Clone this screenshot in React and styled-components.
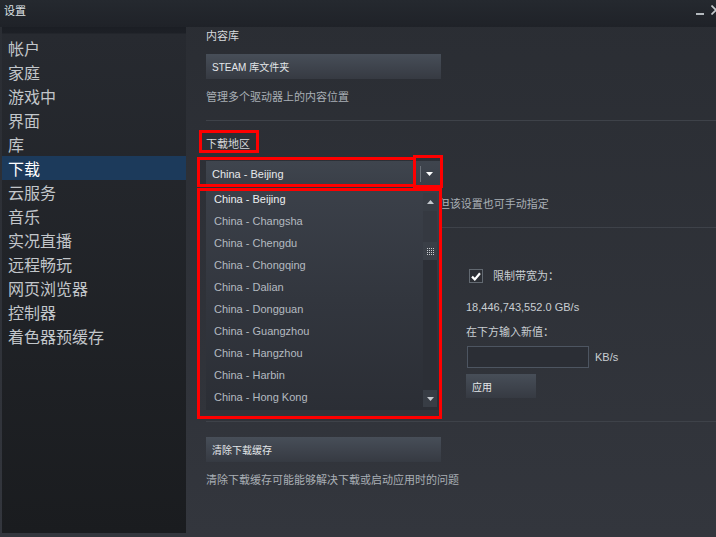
import React from 'react';
import styled, { createGlobalStyle } from 'styled-components';

const FONT = `"Liberation Sans", "Noto Sans CJK SC", Arial, sans-serif`;

const Global = createGlobalStyle`
  html, body { margin: 0; padding: 0; background: #2a2d33; }
  #root { width: 716px; height: 537px; }
  * { box-sizing: border-box; }
`;

const Window = styled.div`
  position: relative;
  width: 716px;
  height: 537px;
  overflow: hidden;
  display: flex;
  flex-direction: column;
  background: linear-gradient(to bottom, #2a2d33 0%, #33363d 100%);
  font-family: ${FONT};
`;

const TitleBar = styled.div`
  flex: none;
  height: 27px;
  display: flex;
  align-items: flex-start;
  justify-content: space-between;
  padding: 4px 0 0 4px;
  background: linear-gradient(to bottom, #25292f, #1f2228);
`;

const Title = styled.span`
  font-size: 11px;
  line-height: 14px;
  color: #dfe3e6;
`;

const Controls = styled.div`
  display: flex;
  align-items: flex-start;
  margin-right: -5px;
`;

const MinimizeBar = styled.div`
  width: 8px;
  height: 2px;
  margin-top: 9px;
  background: #b4b9be;
`;

const CloseIcon = styled.svg`
  width: 10px;
  height: 10px;
  margin: 1px 0 0 7px;
`;

const Body = styled.div`
  flex: 1;
  display: flex;
  min-height: 0;
`;

const Sidebar = styled.nav`
  flex: none;
  width: 184px;
  margin: 0 0 4px 2px;
  padding-top: 9px;
  background: linear-gradient(
    to bottom,
    #1b1e24 0px,
    #1d2026 6px,
    #272a30 7px,
    #1a1c1f 100%
  );
`;

const NavItem = styled.div`
  height: 24px;
  line-height: 28px;
  overflow: visible;
  padding-left: 6px;
  font-size: 16px;
  color: ${(p) => (p.$active ? '#ffffff' : '#c2c6ca')};
  background: ${(p) => (p.$active ? '#1c3a5b' : 'transparent')};
  white-space: nowrap;
`;

const Main = styled.main`
  flex: 1;
  min-width: 0;
  display: flex;
  flex-direction: column;
  padding: 2px 0 0 20px;
`;

const Label = styled.div`
  font-size: 11px;
  line-height: 14px;
  color: #d6d9dc;
  margin-top: ${(p) => p.$mt || 0}px;
  white-space: nowrap;
`;

const Desc = styled.div`
  font-size: 11px;
  line-height: 14px;
  color: #a9afb5;
  margin-top: ${(p) => p.$mt || 0}px;
  white-space: nowrap;
`;

const Button = styled.div`
  width: ${(p) => p.$w || 235}px;
  height: ${(p) => p.$h || 25}px;
  margin-top: ${(p) => p.$mt || 0}px;
  display: flex;
  align-items: center;
  padding-left: 6px;
  font-size: 10px;
  color: #e3e6e9;
  background: linear-gradient(to bottom, #474e58 0%, #3d424b 60%, #363a42 100%);
  white-space: nowrap;
`;

const Divider = styled.div`
  height: 1px;
  flex: none;
  background: #3e4249;
  margin-top: ${(p) => p.$mt || 0}px;
`;

const DropdownWrap = styled.div`
  position: relative;
  width: 234px;
  margin-top: 10px;
  z-index: 2;
`;

const DropdownBox = styled.div`
  height: 25px;
  display: flex;
  align-items: center;
  background: linear-gradient(to bottom, #3f454e, #3a3f48);
`;

const DropdownValue = styled.div`
  flex: 1;
  padding-left: 6px;
  font-size: 11px;
  color: #e6e9ec;
`;

const ArrowButton = styled.div`
  width: 20px;
  height: 100%;
  display: flex;
  align-items: center;
`;

const Separator = styled.div`
  width: 1px;
  height: 16px;
  background: #6c727a;
  margin-right: 5px;
`;

const Triangle = styled.svg`
  width: 7px;
  height: 4px;
  display: block;
`;

const List = styled.div`
  position: absolute;
  left: 0;
  top: 28px;
  width: 234px;
  height: 221px;
  display: flex;
  background: linear-gradient(to bottom, #3b4049 0%, #32363e 50%, #2b2e35 100%);
`;

const ListItems = styled.div`
  flex: 1;
`;

const ListItem = styled.div`
  height: 22px;
  line-height: 21px;
  padding-left: 8px;
  font-size: 11px;
  color: ${(p) => (p.$current ? '#eceef0' : '#b4bac0')};
  white-space: nowrap;
`;

const Scrollbar = styled.div`
  width: 14px;
  margin: 4px 3px 3px 0;
  display: flex;
  flex-direction: column;
`;

const ScrollBtn = styled.div`
  height: ${(p) => p.$h}px;
  display: flex;
  align-items: center;
  justify-content: center;
  background: #383d45;
`;

const TrackTop = styled.div`
  height: 31px;
  background: #353941;
`;

const Thumb = styled.div`
  height: 18px;
  display: flex;
  align-items: center;
  justify-content: center;
  background: #3a3f47;
`;

const TrackBottom = styled.div`
  flex: 1;
  background: #2c2f36;
`;

const Section = styled.div`
  display: grid;
  grid-template-columns: 235px 1fr;
  column-gap: 25px;
`;

const Column = styled.div`
  display: flex;
  flex-direction: column;
  align-items: flex-start;
`;

const CheckRow = styled.div`
  display: flex;
  align-items: center;
  height: 14px;
  margin-top: 41px;
  margin-left: 3px;
  gap: 10px;
`;

const CheckBox = styled.div`
  width: 14px;
  height: 14px;
  border: 1px solid #626971;
  background: #2c2f35;
  display: flex;
  align-items: center;
  justify-content: center;
`;

const Text = styled.span`
  font-size: 11px;
  line-height: 14px;
  color: ${(p) => p.$color || '#c9ced2'};
  white-space: nowrap;
`;

const Para = styled.div`
  font-size: 11px;
  line-height: 14px;
  color: #c9ced2;
  margin-top: ${(p) => p.$mt || 0}px;
  white-space: nowrap;
`;

const InputRow = styled.div`
  display: flex;
  align-items: center;
  margin-top: 7px;
  gap: 6px;
`;

const Input = styled.div`
  width: 122px;
  height: 22px;
  margin-left: 1px;
  border: 1px solid #4d5561;
  background: #2b2e35;
`;

const RedBox = styled.div`
  position: absolute;
  left: ${(p) => p.$x}px;
  top: ${(p) => p.$y}px;
  width: ${(p) => p.$w}px;
  height: ${(p) => p.$h}px;
  border: 3px solid #ff0000;
  pointer-events: none;
  z-index: 5;
`;

const navItems = ['帐户', '家庭', '游戏中', '界面', '库', '下载', '云服务', '音乐', '实况直播', '远程畅玩', '网页浏览器', '控制器', '着色器预缓存'];

const regions = [
  'China - Beijing',
  'China - Changsha',
  'China - Chengdu',
  'China - Chongqing',
  'China - Dalian',
  'China - Dongguan',
  'China - Guangzhou',
  'China - Hangzhou',
  'China - Harbin',
  'China - Hong Kong',
];

const Down = ({ color = '#ffffff' }) => (
  <Triangle viewBox="0 0 7 4">
    <path d="M0 0 H7 L3.5 4 Z" fill={color} />
  </Triangle>
);

const Up = ({ color = '#c3c8cd' }) => (
  <Triangle viewBox="0 0 7 4">
    <path d="M0 4 H7 L3.5 0 Z" fill={color} />
  </Triangle>
);

const Grip = () => (
  <svg width="7" height="7" viewBox="0 0 7 7">
    {[0, 2, 4, 6].map((x) =>
      [0, 2, 4, 6].map((y) => <rect key={`${x}-${y}`} x={x} y={y} width="1" height="1" fill="#c8ccd0" />)
    )}
  </svg>
);

export default function App() {
  return (
    <>
      <Global />
      <Window>
        <TitleBar>
          <Title>设置</Title>
          <Controls>
            <MinimizeBar />
            <CloseIcon viewBox="0 0 10 10">
              <path d="M0.5 0.5 L9.5 9.5 M9.5 0.5 L0.5 9.5" stroke="#c4c8cc" strokeWidth="1.6" />
            </CloseIcon>
          </Controls>
        </TitleBar>
        <Body>
          <Sidebar>
            {navItems.map((n) => (
              <NavItem key={n} $active={n === '下载'}>{n}</NavItem>
            ))}
          </Sidebar>
          <Main>
            <Label>内容库</Label>
            <Button $mt={11}>STEAM 库文件夹</Button>
            <Desc $mt={11}>管理多个驱动器上的内容位置</Desc>
            <Divider $mt={16} />
            <Label $mt={16}>下载地区</Label>
            <DropdownWrap>
              <DropdownBox>
                <DropdownValue>China - Beijing</DropdownValue>
                <ArrowButton>
                  <Separator />
                  <Down />
                </ArrowButton>
              </DropdownBox>
              <List>
                <ListItems>
                  {regions.map((r, i) => (
                    <ListItem key={r} $current={i === 0}>{r}</ListItem>
                  ))}
                </ListItems>
                <Scrollbar>
                  <ScrollBtn $h={18}><Up /></ScrollBtn>
                  <TrackTop />
                  <Thumb><Grip /></Thumb>
                  <TrackBottom />
                  <ScrollBtn $h={17}><Down color="#c3c8cd" /></ScrollBtn>
                </Scrollbar>
              </List>
            </DropdownWrap>
            <Desc $mt={11}>Steam 会自动选择离您最近的下载服务器位置，但该设置也可手动指定</Desc>
            <Divider $mt={16} />
            <Section>
              <Column />
              <Column>
                <CheckRow>
                  <CheckBox>
                    <svg width="10" height="9" viewBox="0 0 10 9">
                      <path d="M1 4.6 L3.8 7.4 L9 1.2" stroke="#ffffff" strokeWidth="2.2" fill="none" />
                    </svg>
                  </CheckBox>
                  <Text>限制带宽为：</Text>
                </CheckRow>
                <Para $mt={17}>18,446,743,552.0 GB/s</Para>
                <Para $mt={11}>在下方输入新值：</Para>
                <InputRow>
                  <Input />
                  <Text>KB/s</Text>
                </InputRow>
                <Button $w={70} $h={24} $mt={6}>应用</Button>
              </Column>
            </Section>
            <Divider $mt={23} />
            <Button $mt={15}>清除下载缓存</Button>
            <Desc $mt={11}>清除下载缓存可能能够解决下载或启动应用时的问题</Desc>
          </Main>
        </Body>
        <RedBox $x={199} $y={130} $w={60} $h={23} />
        <RedBox $x={197} $y={157} $w={219} $h={30} />
        <RedBox $x={413} $y={155} $w={30} $h={33} />
        <RedBox $x={197} $y={188} $w={245} $h={231} />
      </Window>
    </>
  );
}
